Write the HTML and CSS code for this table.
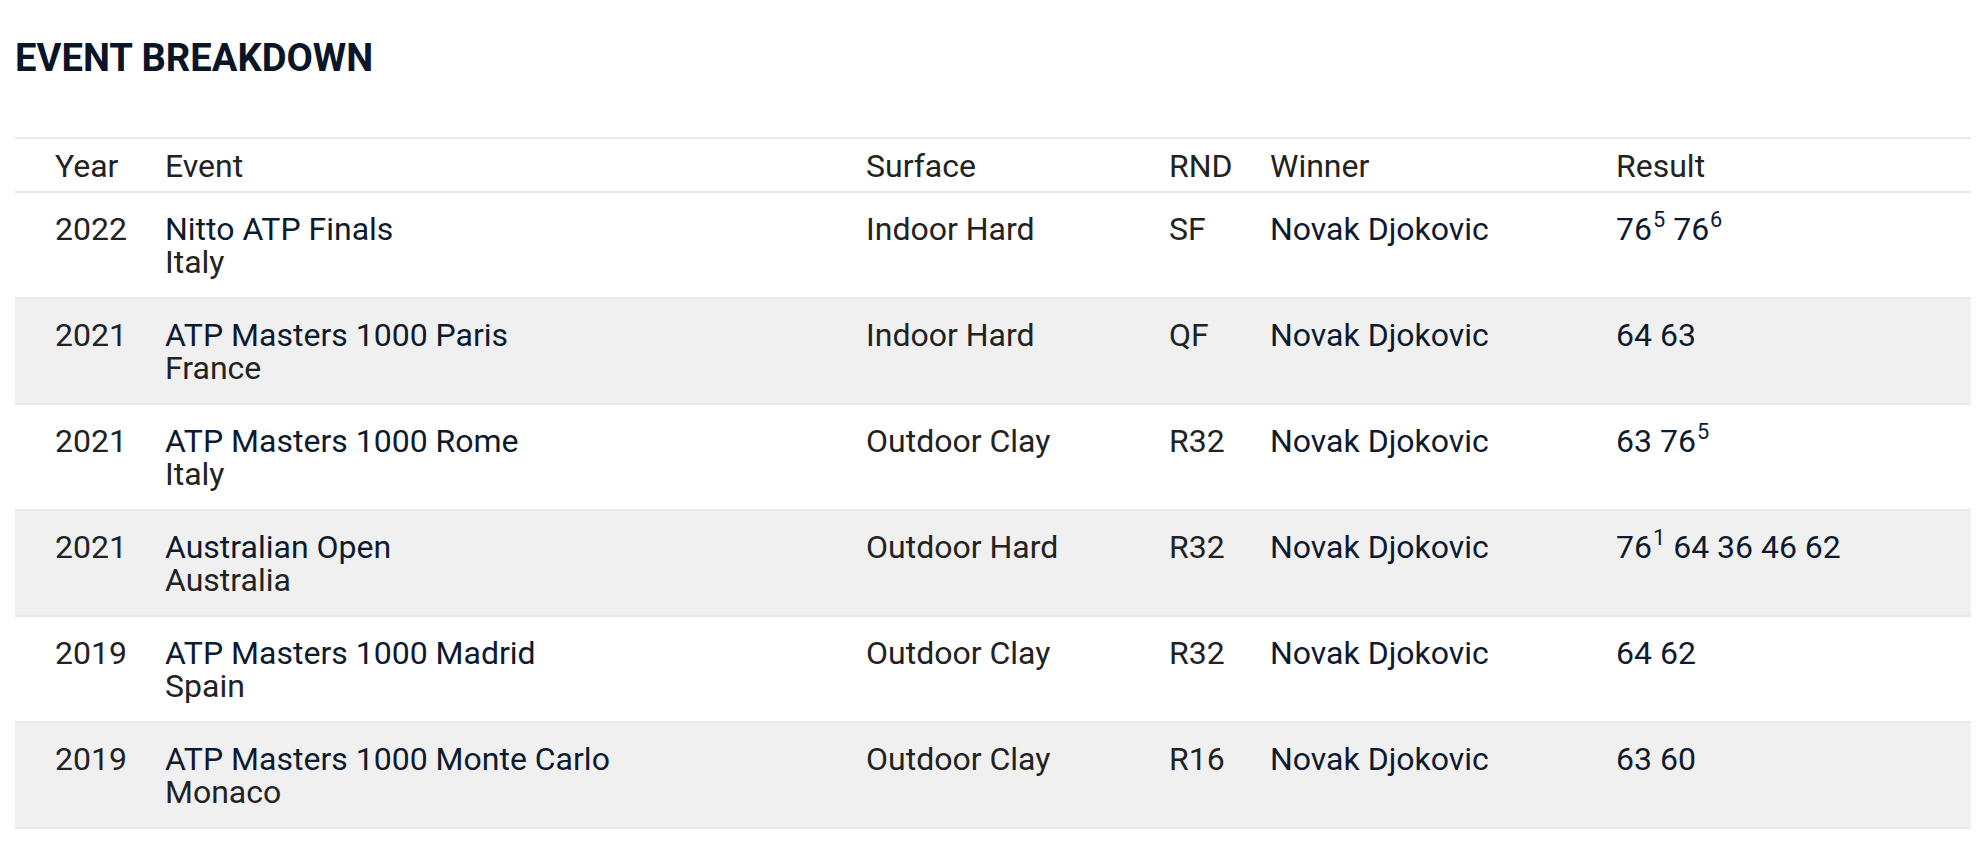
FILE: index.html
```html
<!DOCTYPE html>
<html lang="en">
<head>
<meta charset="utf-8">
<title>Event Breakdown</title>
<link rel="stylesheet" href="styles.css">
</head>
<body>
<section class="breakdown">
  <h2 class="title">EVENT BREAKDOWN</h2>
  <div class="table">
    <div class="row head">
      <div class="cell">Year</div>
      <div class="cell">Event</div>
      <div class="cell">Surface</div>
      <div class="cell">RND</div>
      <div class="cell">Winner</div>
      <div class="cell">Result</div>
    </div>
    <div class="row">
      <div class="cell muted">2022</div>
      <div class="cell"><div class="ev">Nitto ATP Finals</div><div class="muted">Italy</div></div>
      <div class="cell muted">Indoor Hard</div>
      <div class="cell muted">SF</div>
      <div class="cell">Novak Djokovic</div>
      <div class="cell">76<sup>5</sup> 76<sup>6</sup></div>
    </div>
    <div class="row alt">
      <div class="cell muted">2021</div>
      <div class="cell"><div class="ev">ATP Masters 1000 Paris</div><div class="muted">France</div></div>
      <div class="cell muted">Indoor Hard</div>
      <div class="cell muted">QF</div>
      <div class="cell">Novak Djokovic</div>
      <div class="cell">64 63</div>
    </div>
    <div class="row">
      <div class="cell muted">2021</div>
      <div class="cell"><div class="ev">ATP Masters 1000 Rome</div><div class="muted">Italy</div></div>
      <div class="cell muted">Outdoor Clay</div>
      <div class="cell muted">R32</div>
      <div class="cell">Novak Djokovic</div>
      <div class="cell">63 76<sup>5</sup></div>
    </div>
    <div class="row alt">
      <div class="cell muted">2021</div>
      <div class="cell"><div class="ev">Australian Open</div><div class="muted">Australia</div></div>
      <div class="cell muted">Outdoor Hard</div>
      <div class="cell muted">R32</div>
      <div class="cell">Novak Djokovic</div>
      <div class="cell">76<sup>1</sup> 64 36 46 62</div>
    </div>
    <div class="row">
      <div class="cell muted">2019</div>
      <div class="cell"><div class="ev">ATP Masters 1000 Madrid</div><div class="muted">Spain</div></div>
      <div class="cell muted">Outdoor Clay</div>
      <div class="cell muted">R32</div>
      <div class="cell">Novak Djokovic</div>
      <div class="cell">64 62</div>
    </div>
    <div class="row alt">
      <div class="cell muted">2019</div>
      <div class="cell"><div class="ev">ATP Masters 1000 Monte Carlo</div><div class="muted">Monaco</div></div>
      <div class="cell muted">Outdoor Clay</div>
      <div class="cell muted">R16</div>
      <div class="cell">Novak Djokovic</div>
      <div class="cell">63 60</div>
    </div>
  </div>
</section>
</body>
</html>
```

FILE: styles.css
```css
html, body {
  margin: 0;
  padding: 0;
  background: #ffffff;
}

body {
  font-family: Roboto, "Liberation Sans", Arial, sans-serif;
  color: #0d1a2f;
}

.breakdown {
  padding: 36px 16px 0 15px;
}

.title {
  margin: 0;
  font-size: 38.2px;
  line-height: 45px;
  font-weight: 700;
  color: #0b1528;
}

.table {
  margin-top: 56px;
  border-top: 2px solid #e9e9e9;
}

.row {
  display: grid;
  grid-template-columns: 110px 701px 303px 101px 346px 1fr;
  padding: 20px 0 18px 40px;
  border-bottom: 2px solid #e9e9e9;
  font-size: 32px;
  line-height: 33px;
  min-height: 66px;
}

.row.head {
  padding: 11px 0 8px 40px;
  min-height: 0;
  color: #222222;
}

.row.alt {
  background: #f0f0f0;
}

.cell {
  white-space: nowrap;
}

.muted {
  color: #222222;
}

.ev {
  color: #0d1a2f;
}

sup {
  font-size: 0.68em;
  line-height: 0;
  vertical-align: 0;
  position: relative;
  top: -0.6em;
  margin-left: 1px;
}
```
